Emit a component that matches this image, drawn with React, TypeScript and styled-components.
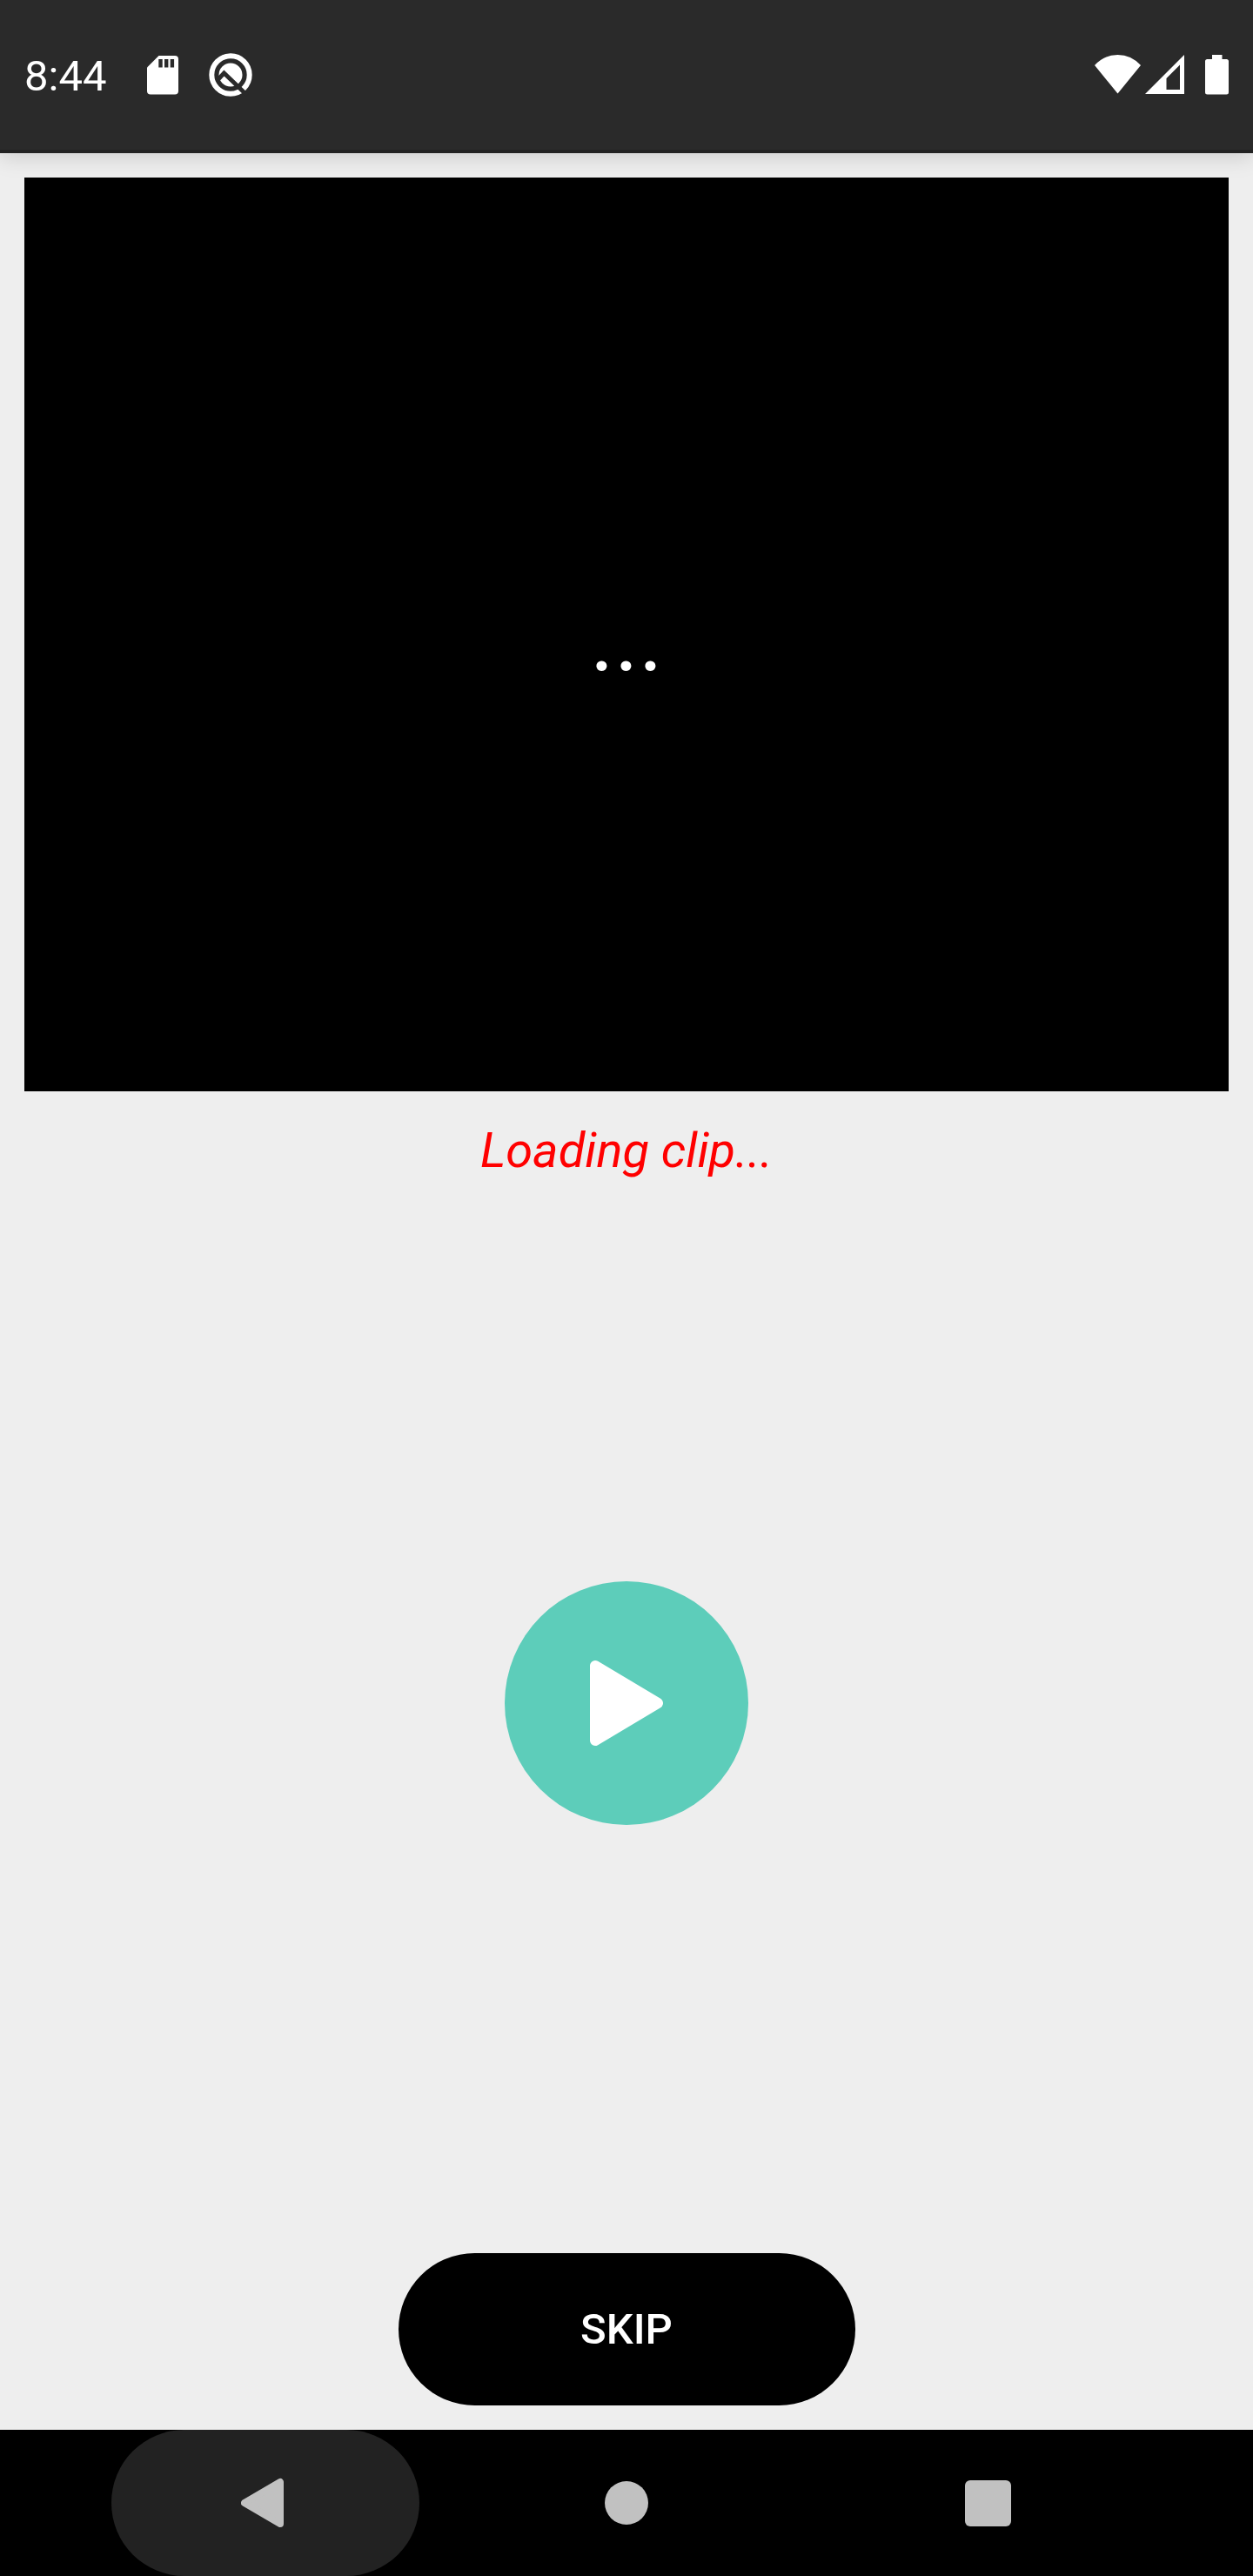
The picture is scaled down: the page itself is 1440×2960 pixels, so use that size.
import React from "react";
import styled, { createGlobalStyle } from "styled-components";

const GlobalStyle = createGlobalStyle`
  * { box-sizing: border-box; }
  body {
    margin: 0;
    background: #eeeeee;
    font-family: Roboto, "Liberation Sans", sans-serif;
  }
  button {
    border: 0;
    padding: 0;
    font-family: inherit;
    cursor: pointer;
  }
  svg { display: block; }
`;

const Screen = styled.div`
  display: flex;
  flex-direction: column;
  min-height: 100vh;
  background: #eeeeee;
`;

const StatusBar = styled.header`
  display: flex;
  justify-content: space-between;
  height: 176px;
  padding: 56px 28px 0;
  background: #2a2a2a;
  border-bottom: 4px solid #222222;
  box-shadow: 0 4px 24px rgba(0, 0, 0, 0.15);
  color: #ffffff;
`;

const StatusGroup = styled.div<{ $gap: number }>`
  display: flex;
  align-items: center;
  gap: ${({ $gap }) => $gap}px;
  height: 60px;
`;

const Clock = styled.time`
  padding-top: 4px;
  margin-right: 12px;
  font-size: 49px;
  line-height: 60px;
`;

const Main = styled.main`
  flex: 1;
  display: flex;
  flex-direction: column;
  align-items: center;
  padding: 28px;
`;

const Video = styled.section`
  display: flex;
  align-items: center;
  justify-content: center;
  width: 100%;
  height: 1050px;
  padding-top: 10px;
  background: #000000;
  color: #ffffff;
  font-size: 106px;
  line-height: 132px;
`;

const Status = styled.p`
  margin: 28px 0 0;
  color: #ff0000;
  font-size: 56px;
  font-style: italic;
  line-height: 80px;
`;

const Controls = styled.div`
  flex: 1;
  display: flex;
  align-items: center;
  justify-content: center;
  margin-bottom: 38px;
`;

const PlayButton = styled.button`
  width: 280px;
  height: 280px;
  border-radius: 50%;
  background: #5dcdba;
`;

const SkipButton = styled.button`
  width: 525px;
  height: 175px;
  border-radius: 88px;
  background: #000000;
  color: #ffffff;
  font-size: 49px;
  font-weight: 500;
  line-height: 60px;
`;

const NavBar = styled.nav`
  display: flex;
  justify-content: center;
  gap: 61px;
  height: 168px;
  background: #000000;
`;

const NavButton = styled.button<{ $active?: boolean }>`
  display: flex;
  align-items: center;
  justify-content: center;
  width: 354px;
  height: 168px;
  border-radius: 84px;
  background: ${({ $active }) => ($active ? "#222222" : "transparent")};
`;

const SdCardIcon = () => (
  <svg width="36" height="46" viewBox="0 0 36 46" aria-hidden="true">
    <path fill="#fff" d="M13.5 1H32a4 4 0 0 1 4 4V41.500a4 4 0 0 1-4 4H4a4 4 0 0 1-4-4V14.500Z" />
    <path fill="#2a2a2a" d="M13.300 5h4.400v9.400h-4.400zM20 5h4.400v9.400H20zM26.700 5h4.400v9.400h-4.400z" />
  </svg>
);

const AndroidQIcon = () => (
  <svg width="50" height="52" viewBox="0 0 50 52" aria-hidden="true">
    <circle cx="25" cy="26" r="21.700" fill="none" stroke="#fff" strokeWidth="6" />
    <circle cx="25" cy="26" r="13.500" fill="#fff" />
    <path d="M9 33 17.500 24 44 49.500" fill="none" stroke="#2a2a2a" strokeWidth="5" />
  </svg>
);

const WifiIcon = () => (
  <svg width="54" height="46" viewBox="0 0 54 46" aria-hidden="true">
    <path fill="#fff" d="M0 12Q11 0 26.500 0T53 12L26.500 44.500Z" />
  </svg>
);

const SignalIcon = () => (
  <svg width="45" height="46" viewBox="0 0 45 46" aria-hidden="true">
    <path fill="#fff" fillRule="evenodd" d="M45 0V45H0ZM40 11.500 24.500 27V40H40Z" />
  </svg>
);

const BatteryIcon = () => (
  <svg width="27" height="46" viewBox="0 0 27 46" aria-hidden="true">
    <path fill="#fff" d="M8 0H19.500V5H24.500A2.500 2.500 0 0 1 27 7.500V43a2.500 2.500 0 0 1-2.500 2.500H2.500A2.500 2.500 0 0 1 0 43V7.500A2.500 2.500 0 0 1 2.500 5H8Z" />
  </svg>
);

const PlayIcon = () => (
  <svg width="280" height="280" viewBox="0 0 280 280" aria-hidden="true">
    <path d="M104 97V183L176 140Z" fill="#fff" stroke="#fff" strokeWidth="12" strokeLinejoin="round" />
  </svg>
);

const BackIcon = () => (
  <svg width="56" height="60" viewBox="0 0 56 60" aria-hidden="true">
    <path d="M45 6V54L4 30Z" fill="#c1c1c1" stroke="#c1c1c1" strokeWidth="8" strokeLinejoin="round" />
  </svg>
);

const HomeIcon = () => (
  <svg width="50" height="50" viewBox="0 0 50 50" aria-hidden="true">
    <circle cx="25" cy="25" r="25" fill="#c1c1c1" />
  </svg>
);

const RecentsIcon = () => (
  <svg width="53" height="53" viewBox="0 0 53 53" aria-hidden="true">
    <rect width="53" height="53" rx="6" fill="#c1c1c1" />
  </svg>
);

export default function App() {
  return (
    <Screen>
      <GlobalStyle />
      <StatusBar>
        <StatusGroup $gap={35}>
          <Clock>8:44</Clock>
          <SdCardIcon />
          <AndroidQIcon />
        </StatusGroup>
        <StatusGroup $gap={24}>
          <StatusGroup $gap={4}>
            <WifiIcon />
            <SignalIcon />
          </StatusGroup>
          <BatteryIcon />
        </StatusGroup>
      </StatusBar>
      <Main>
        <Video aria-label="Video clip">...</Video>
        <Status role="status">Loading clip...</Status>
        <Controls>
          <PlayButton type="button" aria-label="Play">
            <PlayIcon />
          </PlayButton>
        </Controls>
        <SkipButton type="button">SKIP</SkipButton>
      </Main>
      <NavBar aria-label="System navigation">
        <NavButton type="button" aria-label="Back" $active>
          <BackIcon />
        </NavButton>
        <NavButton type="button" aria-label="Home">
          <HomeIcon />
        </NavButton>
        <NavButton type="button" aria-label="Recent apps">
          <RecentsIcon />
        </NavButton>
      </NavBar>
    </Screen>
  );
}
